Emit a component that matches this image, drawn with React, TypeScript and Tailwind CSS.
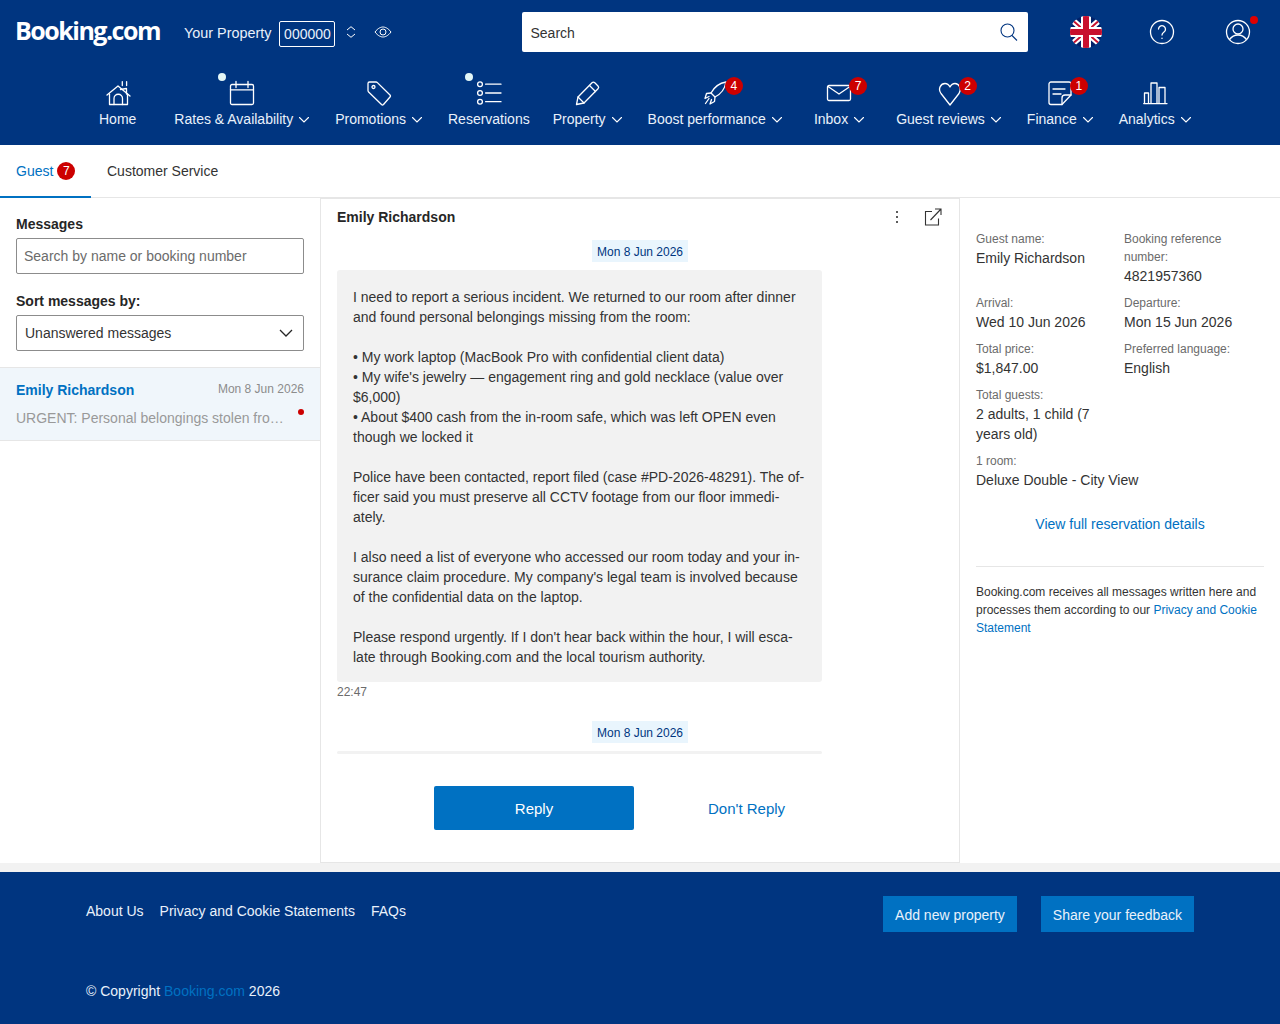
import type { ReactNode } from "react";

const Ico = ({ children }: { children: ReactNode }) => (
  <svg width="28" height="26" viewBox="0 0 28 26" fill="none" stroke="#fff" strokeWidth="1.3" strokeLinecap="round" strokeLinejoin="round">
    {children}
  </svg>
);

const Chevron = () => (
  <svg width="10" height="6" viewBox="0 0 10 6" fill="none" stroke="#fff" strokeWidth="1.1" strokeLinecap="round" className="ml-[6px] mt-[1px]">
    <path d="M0.5 0.5 L5 5 L9.5 0.5" />
  </svg>
);

const navItems = [
  {
    label: "Home",
    margin: "ml-[99px]",
    icon: (
      <Ico>
        <path d="M3 15 L14 6 L26 16" />
        <path d="M5.5 14 V24.5 H23.5 V14" />
        <path d="M10 24.5 V18.5 A4 4 0 0 1 18.5 18.5 V24.5" />
        <path d="M16.5 9.5 L22.5 8.5 V14" />
        <path d="M18.3 1.6 V5.6 M22.6 1.6 V5.6" />
      </Ico>
    ),
  },
  {
    label: "Rates & Availability",
    margin: "ml-[38px]",
    chevron: true,
    dot: true,
    icon: (
      <Ico>
        <rect x="2.5" y="4.5" width="23" height="20" rx="1.5" />
        <path d="M2.5 9.8 H25.5 M8 1.5 V7.5 M20 1.5 V7.5" />
      </Ico>
    ),
  },
  {
    label: "Promotions",
    margin: "ml-[26px]",
    chevron: true,
    icon: (
      <Ico>
        <path d="M4.5 2 H11 a2 2 0 0 1 1.4 .6 L25 15 a1.5 1.5 0 0 1 0 2 L18.5 24.5 a1.5 1.5 0 0 1 -2 0 L3.6 12 A2 2 0 0 1 3 10.6 V3.5 A1.5 1.5 0 0 1 4.5 2 Z" />
        <circle cx="8.5" cy="7" r="1.5" />
      </Ico>
    ),
  },
  {
    label: "Reservations",
    margin: "ml-[26px]",
    dot: true,
    icon: (
      <Ico>
        <circle cx="5" cy="4.2" r="2.4" />
        <circle cx="5" cy="13" r="2.4" />
        <circle cx="5" cy="21.7" r="2.4" />
        <path d="M10.6 4.2 H26 M10.6 13 H26 M10.6 21.7 H26" />
      </Ico>
    ),
  },
  {
    label: "Property",
    margin: "ml-[23px]",
    chevron: true,
    icon: (
      <Ico>
        <path d="M3.5 24.5 L5 17 L19 2.8 a2 2 0 0 1 2.8 0 L25 6 a2 2 0 0 1 0 2.8 L11 23 Z" />
        <path d="M5 17 L11 23 M16.5 5.5 L22.5 11.5" />
      </Ico>
    ),
  },
  {
    label: "Boost performance",
    margin: "ml-[26px]",
    chevron: true,
    badge: "4",
    icon: (
      <Ico>
        <path d="M25 2 C19 3 13 7.5 10 13 L14 17 C20 14 24 8 25 2 Z" />
        <path d="M10 13 L5.5 13.5 L4 18.5 L8 16.5 M14 17 L13.5 21.5 L9 24 L10.5 19.5" />
        <path d="M8 18.5 L4.5 23.5" />
      </Ico>
    ),
  },
  {
    label: "Inbox",
    margin: "ml-[32px]",
    chevron: true,
    badge: "7",
    icon: (
      <Ico>
        <rect x="2.5" y="5.5" width="23" height="15" rx="1.5" />
        <path d="M3 6.5 L14 14 L25 6.5" />
      </Ico>
    ),
  },
  {
    label: "Guest reviews",
    margin: "ml-[32px]",
    chevron: true,
    badge: "2",
    icon: (
      <Ico>
        <path d="M15 25 L6 13.5 C2.5 8.5 6 3.5 10 3.5 C12.5 3.5 14 5 15 7 C16 5 17.5 3.5 20 3.5 C24 3.5 27 8.5 24 13.5 Z" />
      </Ico>
    ),
  },
  {
    label: "Finance",
    margin: "ml-[26px]",
    chevron: true,
    badge: "1",
    icon: (
      <Ico>
        <path d="M5 2 H23 a2 2 0 0 1 2 2 V15 L16 24.5 H5 a2 2 0 0 1 -2 -2 V4 a2 2 0 0 1 2 -2 Z" />
        <path d="M25 15 H19 a3 3 0 0 0 -3 3 V24.5" />
        <path d="M7 9 H19 M7 14 H15" />
      </Ico>
    ),
  },
  {
    label: "Analytics",
    margin: "ml-[26px]",
    chevron: true,
    icon: (
      <Ico>
        <path d="M3.5 23 V13 H7.5 V23 M10 23 V3 H16 V23 M18 23 V7.5 H24 V23" />
        <path d="M2.7 23.6 H26" />
      </Ico>
    ),
  },
];

const messageLines = [
  "I need to report a serious incident. We returned to our room after dinner",
  "and found personal belongings missing from the room:",
  "",
  "• My work laptop (MacBook Pro with confidential client data)",
  "• My wife's jewelry — engagement ring and gold necklace (value over",
  "$6,000)",
  "• About $400 cash from the in-room safe, which was left OPEN even",
  "though we locked it",
  "",
  "Police have been contacted, report filed (case #PD-2026-48291). The of-",
  "ficer said you must preserve all CCTV footage from our floor immedi-",
  "ately.",
  "",
  "I also need a list of everyone who accessed our room today and your in-",
  "surance claim procedure. My company's legal team is involved because",
  "of the confidential data on the laptop.",
  "",
  "Please respond urgently. If I don't hear back within the hour, I will esca-",
  "late through Booking.com and the local tourism authority.",
];

const Flag = () => (
  <svg width="32" height="32" viewBox="0 0 32 32">
    <defs>
      <clipPath id="flagClip">
        <circle cx="16" cy="16" r="16" />
      </clipPath>
    </defs>
    <g clipPath="url(#flagClip)">
      <rect width="32" height="32" fill="#012169" />
      <path d="M0 2 L32 30 M32 2 L0 30" stroke="#fff" strokeWidth="6" />
      <path d="M0 2 L32 30 M32 2 L0 30" stroke="#c8102e" strokeWidth="2" />
      <path d="M16 0 V32 M0 16 H32" stroke="#fff" strokeWidth="10" />
      <path d="M16 0 V32 M0 16 H32" stroke="#c8102e" strokeWidth="6" />
    </g>
  </svg>
);

const Detail = ({ label, value, className }: { label: ReactNode; value: ReactNode; className?: string }) => (
  <div className={className}>
    <div className="text-xs leading-[18px] text-[#6b6b6b]">{label}</div>
    <div className="text-sm leading-5 text-[#333]">{value}</div>
  </div>
);

const DateChip = () => (
  <div className="flex justify-center">
    <span className="h-[22px] w-[96px] bg-[#e9f5fd] text-center text-xs leading-[24px] text-[#003580]">Mon 8 Jun 2026</span>
  </div>
);

export default function App() {
  return (
    <div className="flex h-[1024px] flex-col overflow-hidden bg-[#f2f2f2] font-['Liberation_Sans',Arial,sans-serif]">
      {/* Header */}
      <header className="h-[145px] shrink-0 bg-[#003580] text-[#e9f1fb]">
        <div className="flex h-[64px] items-start">
          <span className="ml-[15px] mt-[12px] w-[145px] font-['Open_Sans',sans-serif] text-[25px] leading-[36px] font-bold tracking-[-1.5px] text-white">
            Booking.com
          </span>
          <span className="ml-[24px] mt-[23px] text-[14.4px] leading-5">Your Property</span>
          <span className="ml-[8px] mt-[21px] h-[26px] w-[56px] rounded-[2px] border border-white text-center text-sm leading-6">000000</span>
          <svg width="10" height="12" viewBox="0 0 10 12" fill="none" stroke="#fff" strokeWidth="1" className="ml-[11px] mt-[26px]">
            <path d="M1 4 L5 0.7 L9 4 M1 8 L5 11.3 L9 8" />
          </svg>
          <svg width="18" height="12" viewBox="0 0 18 12" fill="none" stroke="#fff" strokeWidth="1" className="ml-[18px] mt-[26px]">
            <path d="M1 6 C4 2 7 1 9 1 C11 1 14 2 17 6 C14 10 11 11 9 11 C7 11 4 10 1 6 Z" />
            <circle cx="9" cy="6" r="3" />
          </svg>
          <div className="ml-[130px] mt-[12px] flex h-[40px] w-[506px] items-center justify-between rounded-[2px] bg-white pl-[8px] pr-[10px]">
            <span className="pt-px text-sm text-[#333]">Search</span>
            <svg width="18" height="18" viewBox="0 0 18 18" fill="none" stroke="#003580" strokeWidth="1.1">
              <circle cx="7.5" cy="7.5" r="6.5" />
              <path d="M12 12.5 L17 17.5" />
            </svg>
          </div>
          <div className="ml-[42px] mt-[16px]">
            <Flag />
          </div>
          <svg width="26" height="26" viewBox="0 0 26 26" fill="none" stroke="#fff" strokeWidth="1.3" strokeLinecap="round" className="ml-[47px] mt-[19px]">
            <circle cx="13" cy="13" r="11.5" />
            <path d="M9.5 10 a3.5 3.5 0 1 1 5.5 3 c-1.5 1 -2 1.5 -2 3" />
            <path d="M13 19.2 V19.4" />
          </svg>
          <div className="relative ml-[50px] mt-[19px]">
            <svg width="26" height="26" viewBox="0 0 26 26" fill="none" stroke="#fff" strokeWidth="1.3">
              <circle cx="13" cy="13" r="11.5" />
              <circle cx="13" cy="10" r="5" />
              <path d="M4.5 20.5 C7 17 10 16 13 16 C16 16 19 17 21.5 20.5" />
            </svg>
            <span className="absolute left-[25px] top-[-3px] h-[8px] w-[8px] rounded-full bg-[#e00000]" />
          </div>
        </div>
        <nav className="flex">
          {navItems.map((item) => (
            <div key={item.label} className={`flex flex-col items-center ${item.margin}`}>
              <div className="relative mt-[16px] h-[26px] w-[28px]">
                {item.icon}
                {item.dot && <span className="absolute left-[-10px] top-[-7px] h-[8px] w-[8px] rounded-full bg-[#e3f7f7]" />}
                {item.badge && (
                  <span className="absolute left-[24px] top-[-3px] flex h-[18px] w-[18px] items-center justify-center rounded-full bg-[#cc0000] text-xs text-white">
                    {item.badge}
                  </span>
                )}
              </div>
              <div className="mt-[3px] flex h-5 items-center text-sm">
                {item.label}
                {item.chevron && <Chevron />}
              </div>
            </div>
          ))}
        </nav>
      </header>

      {/* Body */}
      <main className="flex h-[718px] shrink-0 flex-col bg-white">
        <div className="flex h-[53px] shrink-0 border-b border-[#e6e6e6] text-sm">
          <div className="-mb-px flex w-[91px] items-center border-b-2 border-[#0071c2] pl-4 text-[#0071c2]">
            Guest
            <span className="ml-[4px] flex h-[18px] w-[18px] items-center justify-center rounded-full bg-[#cc0000] text-xs text-white">7</span>
          </div>
          <div className="ml-4 flex items-center text-[#333]">Customer Service</div>
        </div>

        <div className="flex min-h-0 flex-1">
          {/* Messages list */}
          <aside className="w-[321px] shrink-0 border-r border-[#e6e6e6]">
            <div className="px-4 pt-[16px]">
              <div className="text-sm leading-5 font-bold text-[#262626]">Messages</div>
              <div className="mt-[4px] flex h-[36px] items-center rounded-[2px] border border-[#8c8c8c] pl-[7px] text-sm text-[#6b6b6b]">
                Search by name or booking number
              </div>
              <div className="mt-[17px] text-sm leading-5 font-bold text-[#262626]">Sort messages by:</div>
              <div className="mt-[4px] flex h-[36px] items-center justify-between rounded-[2px] border border-[#8c8c8c] pl-[8px] pr-[10px] text-sm text-[#333]">
                Unanswered messages
                <svg width="14" height="8" viewBox="0 0 14 8" fill="none" stroke="#262626" strokeWidth="1.3">
                  <path d="M1 1 L7 7 L13 1" />
                </svg>
              </div>
            </div>
            <div className="mt-[16px] h-[74px] border-y border-[#e6e6e6] bg-[#f0f6fb] px-4 pt-[12px]">
              <div className="flex items-start justify-between">
                <span className="text-sm leading-5 font-bold text-[#0071c2]">Emily Richardson</span>
                <span className="text-xs leading-[18px] text-[#8c8c8c]">Mon 8 Jun 2026</span>
              </div>
              <div className="relative mt-[8px]">
                <div className="whitespace-nowrap text-sm leading-5 text-[#999]">URGENT: Personal belongings stolen fro…</div>
                <span className="absolute right-0 top-[1px] h-[6px] w-[6px] rounded-full bg-[#cc0000]" />
              </div>
            </div>
          </aside>

          {/* Conversation */}
          <section className="flex-1 border-y border-r border-[#e6e6e6] px-4">
            <div className="flex h-[36px] items-center justify-between">
              <span className="text-sm font-bold text-[#262626]">Emily Richardson</span>
              <div className="mr-[1px] flex items-center">
                <svg width="4" height="14" viewBox="0 0 4 14" fill="#262626">
                  <circle cx="2" cy="2" r="1" />
                  <circle cx="2" cy="7" r="1" />
                  <circle cx="2" cy="12" r="1" />
                </svg>
                <svg width="18" height="18" viewBox="0 0 18 18" fill="none" stroke="#333" strokeWidth="1.1" className="ml-[25px]">
                  <path d="M8 3.5 H1.5 V17 H14.5 V10.5 M6.5 12 L17 1 M11 1 H17 V7" />
                </svg>
              </div>
            </div>
            <div className="mt-[5px]">
              <DateChip />
            </div>
            <div className="mt-[8px] w-[485px] rounded-[3px] bg-[#f2f2f2] px-4 pb-[15px] pt-[17px] text-sm leading-5 text-[#333]">
              {messageLines.map((line, i) => (
                <div key={i} className="h-5 whitespace-nowrap">
                  {line}
                </div>
              ))}
            </div>
            <div className="mt-px text-xs leading-[18px] text-[#6b6b6b]">22:47</div>
            <div className="mt-[20px]">
              <DateChip />
            </div>
            <div className="mt-[8px] h-[3px] w-[485px] rounded-[2px] bg-[#f2f2f2]" />
            <div className="mt-[32px] flex items-center">
              <button className="ml-[97px] h-[44px] w-[200px] rounded-[2px] bg-[#0071c2] pt-[2px] text-[15px] text-white">Reply</button>
              <span className="ml-[74px] pt-[2px] text-[15px] text-[#0071c2]">Don't Reply</span>
            </div>
          </section>

          {/* Reservation details */}
          <aside className="w-[320px] shrink-0 px-4 pt-[32px]">
            <div className="grid grid-cols-[148px_140px] gap-y-[8px]">
              <Detail label="Guest name:" value="Emily Richardson" />
              <Detail label={<>Booking reference<br />number:</>} value="4821957360" />
              <Detail label="Arrival:" value="Wed 10 Jun 2026" />
              <Detail label="Departure:" value="Mon 15 Jun 2026" />
              <Detail label="Total price:" value="$1,847.00" />
              <Detail label="Preferred language:" value="English" />
              <Detail label="Total guests:" value={<>2 adults, 1 child (7<br />years old)</>} />
              <div />
              <Detail label="1 room:" value="Deluxe Double - City View" className="col-span-2" />
            </div>
            <div className="mt-[24px] text-center text-sm leading-5 text-[#0071c2]">View full reservation details</div>
            <div className="mt-[32px] border-t border-[#e6e6e6] pt-[16px] text-xs leading-[18px] whitespace-nowrap text-[#333]">
              Booking.com receives all messages written here and
              <br />
              processes them according to our <span className="text-[#0071c2]">Privacy and Cookie</span>
              <br />
              <span className="text-[#0071c2]">Statement</span>
            </div>
          </aside>
        </div>
      </main>

      {/* Footer */}
      <footer className="mt-[9px] h-[152px] shrink-0 bg-[#003580] pl-[86px] text-sm text-[#e9f1fb]">
        <div className="flex items-start">
          <div className="mt-[29px] flex gap-4 leading-5">
            <span>About Us</span>
            <span>Privacy and Cookie Statements</span>
            <span>FAQs</span>
          </div>
          <div className="ml-auto mr-[86px] mt-[24px] flex gap-6">
            <span className="flex h-[36px] items-center bg-[#0071c2] px-3 pt-px">Add new property</span>
            <span className="flex h-[36px] items-center bg-[#0071c2] px-3 pt-px">Share your feedback</span>
          </div>
        </div>
        <div className="mt-[49px] leading-5">
          © Copyright <span className="text-[#0071c2]">Booking.com</span> 2026
        </div>
      </footer>
    </div>
  );
}
